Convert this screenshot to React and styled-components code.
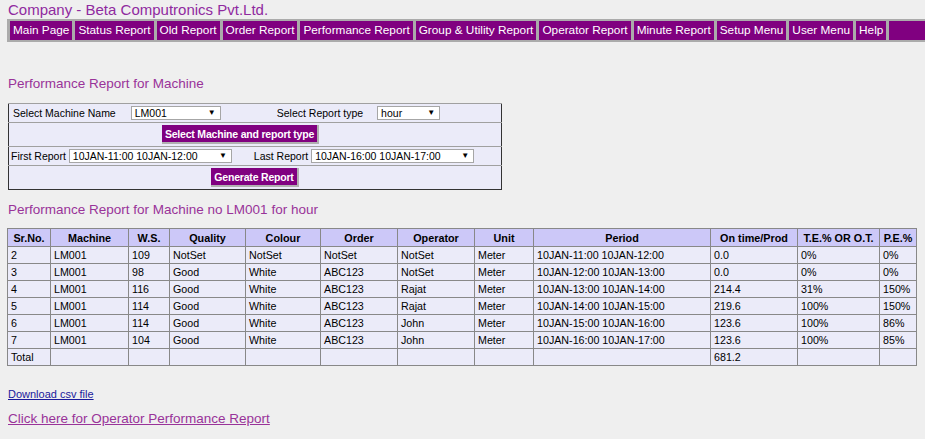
import React from "react";
import styled, { createGlobalStyle } from "styled-components";

const Global = createGlobalStyle`
  html, body { margin: 0; padding: 0; background: #efefef; }
  body { font-family: "Liberation Sans", Arial, sans-serif; color: #000; }
`;

const Page = styled.div`
  padding: 0 0 0 7px;
  width: 925px;
  box-sizing: border-box;
  overflow: hidden;
`;

const Company = styled.div`
  font-size: 15px;
  color: #8f2a9f;
  padding: 1px 0 0 1px;
  height: 18px;
  line-height: 18px;
`;

const Nav = styled.nav`
  display: flex;
  gap: 3px;
  background: #ababab;
  padding: 2px 0 2px 3px;
  margin-right: -10px;
`;

const NavItem = styled.a`
  background: #800080;
  color: #fff;
  font-size: 11.8px;
  height: 19px;
  line-height: 19px;
  padding: 0 3px;
  white-space: nowrap;
  text-decoration: none;
`;

const NavFill = styled.div`
  flex: 1;
  background: #800080;
`;

const Heading = styled.h2`
  font-weight: normal;
  font-size: 13.5px;
  color: #993399;
  margin: ${(p) => p.$mt}px 0 0 1px;
  height: 18px;
  line-height: 18px;
`;

const FormTable = styled.table`
  border-collapse: collapse;
  border: 1px solid #333;
  width: 494px;
  margin: ${(p) => p.$mt}px 0 0 1px;
  background: #ebebf9;
  font-size: 10.5px;
`;

const FormRow = styled.tr`
  height: ${(p) => p.$h}px;
  border-top: 1px solid #a0a0a0;
`;

const FormCell = styled.td`
  padding: 0 ${(p) => p.$pr || 0}px 0 ${(p) => p.$pl || 0}px;
  text-align: ${(p) => p.$align || "left"};
  white-space: nowrap;
`;

const Inline = styled.div`
  display: flex;
  align-items: center;
`;

const Label = styled.span`
  margin-right: ${(p) => p.$mr}px;
`;

const FakeSelect = styled.div`
  display: flex;
  justify-content: space-between;
  align-items: center;
  box-sizing: border-box;
  width: ${(p) => p.$w}px;
  height: 14px;
  border: 1px solid #a6a6a6;
  background: #fff;
  padding: 0 4px 0 3px;
  font-size: 10.5px;
  margin-right: ${(p) => p.$mr || 0}px;
`;

const Arrow = styled.span`
  font-size: 8px;
  line-height: 1;
`;

const PurpleButton = styled.button`
  background: #800080;
  color: #fff;
  font-family: "Liberation Sans", Arial, sans-serif;
  font-weight: bold;
  font-size: 10.5px;
  height: 19px;
  padding: 0 3px;
  border: none;
  border-right: 2px solid #b0b0b0;
  border-bottom: 2px solid #b0b0b0;
  box-sizing: border-box;
  letter-spacing: -0.2px;
  vertical-align: middle;
`;

const DataTable = styled.table`
  border-collapse: collapse;
  border: 1px solid #333;
  width: 909px;
  margin-top: 9px;
  font-size: 10.7px;
  table-layout: fixed;
`;

const Th = styled.th`
  background: #ccc8f8;
  border: 1px solid #888;
  font-weight: bold;
  font-size: 10.8px;
  height: 17px;
  padding: 0;
  text-align: center;
  white-space: nowrap;
`;

const Td = styled.td`
  background: #ebebf9;
  border: 1px solid #888;
  height: 16px;
  padding: 0 0 0 3px;
  white-space: nowrap;
`;

const Footer = styled.div`
  margin-top: 21px;
  padding-left: 1px;
  display: flex;
  flex-direction: column;
  align-items: flex-start;
`;

const CsvLink = styled.a`
  font-size: 11px;
  color: #1a1a9c;
  text-decoration: underline;
  line-height: 14px;
`;

const OpLink = styled.a`
  font-size: 13.5px;
  color: #993399;
  text-decoration: underline;
  margin-top: 9px;
  line-height: 17px;
`;

const navItems = [
  "Main Page",
  "Status Report",
  "Old Report",
  "Order Report",
  "Performance Report",
  "Group & Utility Report",
  "Operator Report",
  "Minute Report",
  "Setup Menu",
  "User Menu",
  "Help",
];

const cols = [
  ["Sr.No.", 43],
  ["Machine", 78],
  ["W.S.", 41],
  ["Quality", 76],
  ["Colour", 75],
  ["Order", 77],
  ["Operator", 77],
  ["Unit", 59],
  ["Period", 177],
  ["On time/Prod", 87],
  ["T.E.% OR O.T.", 82],
  ["P.E.%", 37],
];

const rows = [
  ["2", "LM001", "109", "NotSet", "NotSet", "NotSet", "NotSet", "Meter", "10JAN-11:00 10JAN-12:00", "0.0", "0%", "0%"],
  ["3", "LM001", "98", "Good", "White", "ABC123", "NotSet", "Meter", "10JAN-12:00 10JAN-13:00", "0.0", "0%", "0%"],
  ["4", "LM001", "116", "Good", "White", "ABC123", "Rajat", "Meter", "10JAN-13:00 10JAN-14:00", "214.4", "31%", "150%"],
  ["5", "LM001", "114", "Good", "White", "ABC123", "Rajat", "Meter", "10JAN-14:00 10JAN-15:00", "219.6", "100%", "150%"],
  ["6", "LM001", "114", "Good", "White", "ABC123", "John", "Meter", "10JAN-15:00 10JAN-16:00", "123.6", "100%", "86%"],
  ["7", "LM001", "104", "Good", "White", "ABC123", "John", "Meter", "10JAN-16:00 10JAN-17:00", "123.6", "100%", "85%"],
  ["Total", "", "", "", "", "", "", "", "", "681.2", "", ""],
];

export default function App() {
  return (
    <Page>
      <Global />
      <Company>Company - Beta Computronics Pvt.Ltd.</Company>
      <Nav>
        {navItems.map((n) => (
          <NavItem key={n} href="#">{n}</NavItem>
        ))}
        <NavFill />
      </Nav>
      <Heading $mt={33}>Performance Report for Machine</Heading>
      <FormTable $mt={10}>
        <tbody>
          <FormRow $h={19}>
            <FormCell $pl={4}>
              <Inline>
                <Label $mr={15}>Select Machine Name</Label>
                <FakeSelect $w={90} $mr={56}>
                  <span>LM001</span>
                  <Arrow>▼</Arrow>
                </FakeSelect>
                <Label $mr={14}>Select Report type</Label>
                <FakeSelect $w={63}>
                  <span>hour</span>
                  <Arrow>▼</Arrow>
                </FakeSelect>
              </Inline>
            </FormCell>
          </FormRow>
          <FormRow $h={24}>
            <FormCell $align="center" $pr={29}>
              <PurpleButton>Select Machine and report type</PurpleButton>
            </FormCell>
          </FormRow>
          <FormRow $h={19}>
            <FormCell $pl={2}>
              <Inline>
                <Label $mr={3}>First Report</Label>
                <FakeSelect $w={163} $mr={22}>
                  <span>10JAN-11:00 10JAN-12:00</span>
                  <Arrow>▼</Arrow>
                </FakeSelect>
                <Label $mr={3}>Last Report</Label>
                <FakeSelect $w={163}>
                  <span>10JAN-16:00 10JAN-17:00</span>
                  <Arrow>▼</Arrow>
                </FakeSelect>
              </Inline>
            </FormCell>
          </FormRow>
          <FormRow $h={24}>
            <FormCell $align="center">
              <PurpleButton>Generate Report</PurpleButton>
            </FormCell>
          </FormRow>
        </tbody>
      </FormTable>
      <Heading $mt={11}>Performance Report for Machine no LM001 for hour</Heading>
      <DataTable>
        <colgroup>
          {cols.map(([c, w]) => (
            <col key={c} style={{ width: w }} />
          ))}
        </colgroup>
        <thead>
          <tr>
            {cols.map(([c]) => (
              <Th key={c}>{c}</Th>
            ))}
          </tr>
        </thead>
        <tbody>
          {rows.map((r, i) => (
            <tr key={i}>
              {r.map((v, j) => (
                <Td key={j}>{v}</Td>
              ))}
            </tr>
          ))}
        </tbody>
      </DataTable>
      <Footer>
        <CsvLink href="#">Download csv file </CsvLink>
        <OpLink href="#">Click here for Operator Performance Report</OpLink>
      </Footer>
    </Page>
  );
}
